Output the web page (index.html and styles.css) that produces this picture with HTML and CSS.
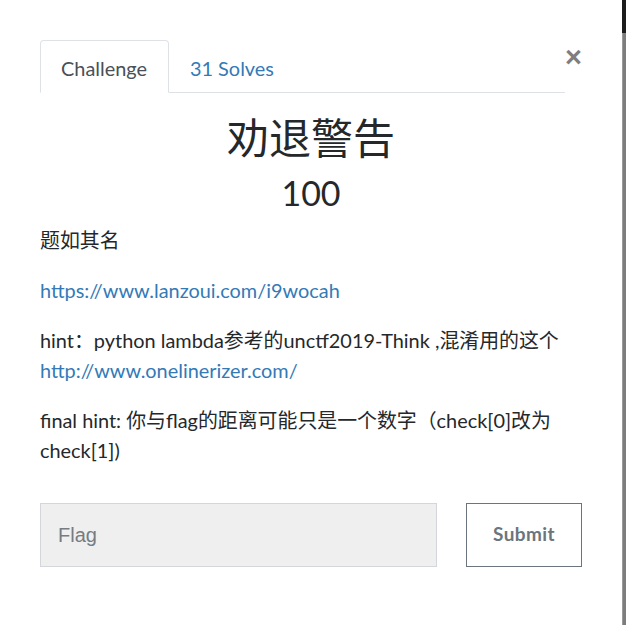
FILE: index.html
```html
<!DOCTYPE html>
<html lang="zh-CN">
<head>
  <meta charset="UTF-8">
  <meta name="viewport" content="width=device-width, initial-scale=1.0">
  <title>劝退警告</title>
  <link rel="stylesheet" href="styles.css">
</head>
<body>
  <div class="page">
    <div class="modal">
      <div class="modal-header">
        <ul class="nav-tabs">
          <li class="nav-item active">Challenge</li>
          <li class="nav-item">31 Solves</li>
        </ul>
        <button class="close" aria-label="Close">&times;</button>
      </div>

      <h2 class="challenge-name">劝退警告</h2>
      <h3 class="challenge-value">100</h3>

      <div class="challenge-desc">
        <p>题如其名</p>
        <p><a href="#">https://www.lanzoui.com/i9wocah</a></p>
        <p>hint：python lambda参考的unctf2019-Think ,混淆用的这个 <a href="#">http://www.onelinerizer.com/</a></p>
        <p>final hint: 你与flag的距离可能只是一个数字（check[0]改为check[1])</p>
      </div>

      <div class="submit-row">
        <input type="text" class="flag-input" placeholder="Flag">
        <button class="submit-btn">Submit</button>
      </div>
    </div>
    <div class="backdrop">
      <div class="backdrop-top"></div>
      <div class="backdrop-rest"></div>
    </div>
  </div>
</body>
</html>
```

FILE: styles.css
```css
html, body {
  margin: 0;
  height: 100%;
}
body {
  font-family: Lato, "Noto Sans CJK SC", sans-serif;
  font-size: 19.9px;
  color: #25282b;
  background-color: #fff;
}
.page {
  display: flex;
  height: 100%;
}
.modal {
  flex: 1;
  padding: 40px 40px 0 40px;
  background-color: #fff;
}
.backdrop {
  width: 4px;
  display: flex;
  flex-direction: column;
}
.backdrop-top {
  height: 33px;
  background-color: #1c1c1c;
}
.backdrop-rest {
  flex: 1;
  background-color: #7d7d7d;
  border-left: 1px solid #9a9a9a;
}
.modal-header {
  display: flex;
  align-items: flex-start;
}
.nav-tabs {
  flex: 1;
  display: flex;
  margin: 0;
  padding: 0;
  list-style: none;
  border-bottom: 1px solid #dee2e6;
}
.nav-item {
  height: 51px;
  line-height: 54px;
  padding: 0 21px 0 20px;
  margin-bottom: -1px;
  border: 1px solid transparent;
  border-radius: 4px 4px 0 0;
  color: #337ab7;
}
.nav-item.active {
  color: #495057;
  border-color: #dee2e6 #dee2e6 #fff;
  background-color: #fff;
}
.close {
  width: 17px;
  margin-top: 3px;
  padding: 0;
  border: none;
  background: none;
  font-family: "Liberation Sans", sans-serif;
  font-size: 29px;
  font-weight: 700;
  line-height: 1;
  color: #000;
  opacity: 0.5;
  cursor: pointer;
}
.challenge-name {
  margin: 20px 0 10px 0;
  text-align: center;
  font-size: 42px;
  font-weight: 400;
  line-height: 50px;
}
.challenge-value {
  margin: 0 0 12px 0;
  text-align: center;
  font-size: 34px;
  font-weight: 400;
  line-height: 40px;
}
.challenge-desc p {
  margin: 0 0 20px 0;
  line-height: 30px;
}
.challenge-desc a {
  color: #337ab7;
  text-decoration: none;
}
.submit-row {
  display: flex;
  gap: 29px;
  margin-top: 38px;
}
.flag-input {
  flex: 1;
  height: 64px;
  box-sizing: border-box;
  padding: 0 17px;
  border: 1px solid #d3d7db;
  background-color: #efefef;
  font-family: "Liberation Sans", sans-serif;
  font-size: 20px;
  color: #495057;
}
.flag-input::placeholder {
  color: #757c83;
}
.submit-btn {
  width: 116px;
  height: 64px;
  box-sizing: border-box;
  border: 1px solid #6c757d;
  background-color: #fff;
  color: #6c757d;
  font-family: Lato, sans-serif;
  font-size: 19px;
  font-weight: 700;
  letter-spacing: 0.4px;
  padding: 0 0 4px 0;
  cursor: pointer;
}
```
